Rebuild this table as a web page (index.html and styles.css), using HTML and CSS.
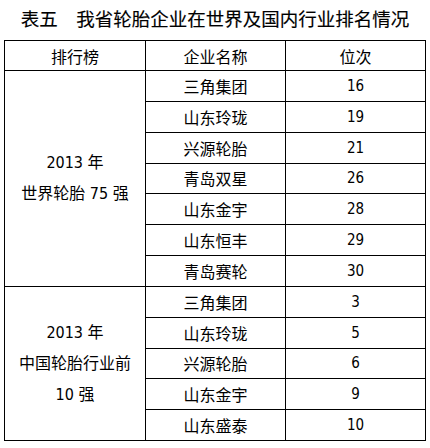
FILE: index.html
```html
<!DOCTYPE html>
<html lang="zh-CN">
<head>
<meta charset="utf-8">
<title>表五</title>
<link rel="stylesheet" href="styles.css">
</head>
<body>
<div class="title">表五　我省轮胎企业在世界及国内行业排名情况</div>
<div class="grid">
  <div class="cell head">排行榜</div>
  <div class="cell head">企业名称</div>
  <div class="cell head">位次</div>

  <div class="cell group g1"><span>2013 年</span><span>世界轮胎 75 强</span></div>
  <div class="cell">三角集团</div><div class="cell num">16</div>
  <div class="cell">山东玲珑</div><div class="cell num">19</div>
  <div class="cell">兴源轮胎</div><div class="cell num">21</div>
  <div class="cell">青岛双星</div><div class="cell num">26</div>
  <div class="cell">山东金宇</div><div class="cell num">28</div>
  <div class="cell">山东恒丰</div><div class="cell num">29</div>
  <div class="cell">青岛赛轮</div><div class="cell num">30</div>

  <div class="cell group g2"><span>2013 年</span><span>中国轮胎行业前</span><span>10 强</span></div>
  <div class="cell">三角集团</div><div class="cell num">3</div>
  <div class="cell">山东玲珑</div><div class="cell num">5</div>
  <div class="cell">兴源轮胎</div><div class="cell num">6</div>
  <div class="cell">山东金宇</div><div class="cell num">9</div>
  <div class="cell">山东盛泰</div><div class="cell num">10</div>
</div>
</body>
</html>
```

FILE: styles.css
```css
html, body {
  margin: 0;
  padding: 0;
  background: #fff;
}
body {
  width: 430px;
  height: 448px;
  overflow: hidden;
  color: #000;
  font-family: "DejaVu Sans Condensed", "DejaVu Sans", "Noto Sans CJK SC", sans-serif;
}
.title {
  height: 40px;
  line-height: 36px;
  text-align: center;
  font-family: "Noto Sans CJK SC", sans-serif;
  font-size: 18.5px;
  font-weight: 400;
  -webkit-text-stroke: 0.15px #000;
}
.grid {
  margin-left: 4px;
  width: 420px;
  height: 399px;
  padding: 1px;
  background: #000;
  display: grid;
  grid-template-columns: 140px 139px 139px;
  grid-template-rows: 29px repeat(12, 1fr);
  gap: 1px;
}
.cell {
  background: #fff;
  display: flex;
  align-items: center;
  justify-content: center;
  font-size: 16px;
  white-space: nowrap;
}
.num {
  font-size: 15px;
}
.group {
  flex-direction: column;
  line-height: 31px;
}
.g1 {
  grid-column: 1;
  grid-row: 2 / span 7;
}
.g2 {
  grid-column: 1;
  grid-row: 9 / span 5;
}
```
